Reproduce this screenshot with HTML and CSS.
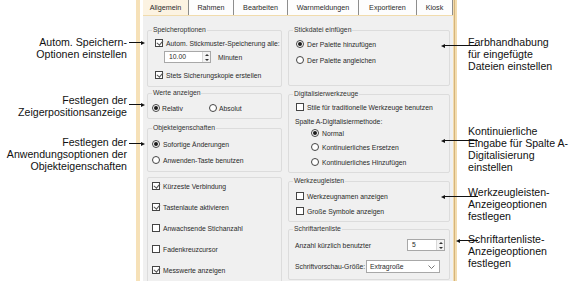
FILE: index.html
```html
<!DOCTYPE html>
<html lang="de">
<head>
    <meta charset="UTF-8">
    <title>Optionen - Allgemein</title>
    <link rel="stylesheet" href="styles.css">
</head>
<body>
    <div class="page">
        <div class="notes notes-left">
            <p class="note n1">Autom. Speichern-<br>Optionen einstellen</p>
            <p class="note n2">Festlegen der<br>Zeigerpositionsanzeige</p>
            <p class="note n3">Festlegen der<br>Anwendungsoptionen der<br>Objekteigenschaften</p>
        </div>

        <div class="dialog">
            <div class="tabs">
                <div class="tab active t1">Allgemein</div>
                <div class="tab t2">Rahmen</div>
                <div class="tab t3">Bearbeiten</div>
                <div class="tab t4">Warnmeldungen</div>
                <div class="tab t5">Exportieren</div>
                <div class="tab t6">Kiosk</div>
            </div>

            <div class="panel">
                <div class="col col-left">
                    <fieldset class="group g-save">
                        <legend>Speicheroptionen</legend>
                        <div class="row r-first"><span class="cb on"></span>Autom. Stickmuster-Speicherung alle:</div>
                        <div class="row r-spin">
                            <span class="spin spin-min"><span class="spin-val">10.00</span><span class="spin-btns"><i class="up"></i><i class="down"></i></span></span>
                            <span class="unit">Minuten</span>
                        </div>
                        <div class="row r-backup"><span class="cb on"></span>Stets Sicherungskopie erstellen</div>
                    </fieldset>

                    <fieldset class="group g-values">
                        <legend>Werte anzeigen</legend>
                        <div class="row">
                            <span class="opt opt-rel"><span class="rb on"></span>Relativ</span>
                            <span class="opt"><span class="rb"></span>Absolut</span>
                        </div>
                    </fieldset>

                    <fieldset class="group g-props">
                        <legend>Objekteigenschaften</legend>
                        <div class="row"><span class="rb on"></span>Sofortige Änderungen</div>
                        <div class="row"><span class="rb"></span>Anwenden-Taste benutzen</div>
                    </fieldset>

                    <fieldset class="group g-misc">
                        <div class="row"><span class="cb on"></span>Kürzeste Verbindung</div>
                        <div class="row"><span class="cb on"></span>Tastenlaute aktivieren</div>
                        <div class="row"><span class="cb"></span>Anwachsende Stichanzahl</div>
                        <div class="row"><span class="cb"></span>Fadenkreuzcursor</div>
                        <div class="row"><span class="cb on"></span>Messwerte anzeigen</div>
                    </fieldset>
                </div>

                <div class="col col-right">
                    <fieldset class="group g-insert">
                        <legend>Stickdatei einfügen</legend>
                        <div class="row"><span class="rb on"></span>Der Palette hinzufügen</div>
                        <div class="row"><span class="rb"></span>Der Palette angleichen</div>
                    </fieldset>

                    <fieldset class="group g-digit">
                        <legend>Digitalisierwerkzeuge</legend>
                        <div class="row"><span class="cb"></span>Stile für traditionelle Werkzeuge benutzen</div>
                        <div class="row r-label">Spalte A-Digitalisiermethode:</div>
                        <div class="row r-sub"><span class="rb on"></span>Normal</div>
                        <div class="row r-sub"><span class="rb"></span>Kontinuierliches Ersetzen</div>
                        <div class="row r-sub r-last"><span class="rb"></span>Kontinuierliches Hinzufügen</div>
                    </fieldset>

                    <fieldset class="group g-tools">
                        <legend>Werkzeugleisten</legend>
                        <div class="row"><span class="cb"></span>Werkzeugnamen anzeigen</div>
                        <div class="row"><span class="cb"></span>Große Symbole anzeigen</div>
                    </fieldset>

                    <fieldset class="group g-fonts">
                        <legend>Schriftartenliste</legend>
                        <div class="row r-recent">
                            <span class="field-label">Anzahl kürzlich benutzter</span>
                            <span class="spin spin-count"><span class="spin-val">5</span><span class="spin-btns"><i class="up"></i><i class="down"></i></span></span>
                        </div>
                        <div class="row r-preview">
                            <span class="field-label fl-short">Schriftvorschau-Größe:</span>
                            <span class="select">Extragroße
                                <svg width="7" height="4" viewBox="0 0 7 4"><polyline points="0.5,0.5 3.5,3.5 6.5,0.5" fill="none" stroke="#666" stroke-width="0.9"/></svg>
                            </span>
                        </div>
                    </fieldset>
                </div>
            </div>
        </div>

        <div class="notes notes-right">
            <p class="note m1">Farbhandhabung<br>für eingefügte<br>Dateien einstellen</p>
            <p class="note m2">Kontinuierliche<br>Eingabe für Spalte A-<br>Digitalisierung<br>einstellen</p>
            <p class="note m3">Werkzeugleisten-<br>Anzeigeoptionen<br>festlegen</p>
            <p class="note m4">Schriftartenliste-<br>Anzeigeoptionen<br>festlegen</p>
        </div>
    </div>
</body>
</html>
```

FILE: styles.css
```css
* {
    box-sizing: border-box;
}

body {
    margin: 0;
    width: 581px;
    height: 281px;
    overflow: hidden;
    background-color: #fff;
    font-family: "Liberation Sans", Arial, sans-serif;
}

.page {
    display: flex;
    height: 281px;
}

/* callout texts */
.notes {
    font-size: 10.6px;
    line-height: 12px;
    color: #111;
}

.note {
    margin: 0;
    position: relative;
    z-index: 5;
}

.note::after {
    content: "";
    position: absolute;
    height: 0;
    border-top: 1px solid #111;
}

.note::before {
    content: "";
    position: absolute;
    width: 0;
    height: 0;
    border-top: 2px solid transparent;
    border-bottom: 2px solid transparent;
}

.notes-left {
    width: 136px;
    flex: none;
    text-align: right;
}

.notes-left .note {
    padding-right: 9px;
}

.notes-left .note::after {
    left: 129px;
    width: 14px;
}

.notes-left .note::before {
    left: 141px;
    border-left: 4px solid #111;
}

.n1 { margin-top: 36px; }
.n2 { margin-top: 34px; }
.n3 { margin-top: 18px; }

.n1::after { top: 6px; }
.n1::before { top: 4.5px; }
.n2::after { top: 10px; }
.n2::before { top: 8.5px; }
.n3::after { top: 7px; }
.n3::before { top: 5.5px; }

.notes-right {
    flex: 1;
    padding-left: 11px;
}

.notes-right .note::after {
    left: -24px;
    width: 34px;
}

.notes-right .note::before {
    left: -27px;
    border-right: 4px solid #111;
}

.m1 { margin-top: 36px; }
.m2 { margin-top: 53px; }
.m3 { margin-top: 13px; }
.m4 { margin-top: 11px; }

.m1::after { top: 9px; }
.m1::before { top: 7.5px; }
.m2::after { top: 15px; }
.m2::before { top: 13.5px; }
.m3::after { top: 10px; }
.m3::before { top: 8.5px; }
.m4::after { top: 7px; }
.m4::before { top: 5.5px; }

.notes-right .m4::after {
    left: -10px;
    width: 20px;
}

.notes-right .m4::before {
    left: -12px;
}

/* dialog */
.dialog {
    width: 321px;
    flex: none;
    display: flex;
    flex-direction: column;
    border-left: 4px solid #f6e1b8;
    border-right: 4px solid #f3dcae;
    padding-left: 3px;
    font-size: 6.8px;
    color: #2a2a2a;
    position: relative;
}

.dialog::after {
    content: "";
    position: absolute;
    top: 0;
    bottom: 0;
    right: -2px;
    border-right: 1px solid #d4b47c;
}

.tabs {
    display: flex;
    height: 16px;
    border-bottom: 1px solid #f1dcad;
    background-color: #fff;
    font-size: 7.2px;
}

.tab {
    height: 15px;
    line-height: 15px;
    text-align: center;
    border-right: 1px solid #8d8d8d;
    background-color: #fdfdfd;
}

.tab.active {
    background-color: #fcf3e2;
}

.t1 { width: 46px; }
.t2 { width: 45px; }
.t3 { width: 54px; }
.t4 { width: 71px; }
.t5 { width: 58px; }
.t6 { width: 36px; }

.panel {
    flex: 1;
    display: flex;
    gap: 6px;
    padding: 0 3px 0 4px;
    background-color: #f0f0f0;
    overflow: hidden;
}

.col {
    display: flex;
    flex-direction: column;
}

.col-left {
    width: 135px;
}

.col-right {
    width: 162px;
}

.group {
    margin: 0;
    padding: 0 4px;
    min-width: 0;
    border: 1px solid #dcdcdc;
    border-radius: 2px;
}

.group legend {
    padding: 0 1px;
    line-height: 10px;
    color: #333;
}

.row {
    display: flex;
    align-items: center;
    gap: 2px;
    height: 12px;
    white-space: nowrap;
}

/* left column */
.g-save {
    margin-top: 9px;
    padding-bottom: 5px;
}

.g-save .row {
    margin-left: 3px;
}

.g-save .r-first {
    margin-top: 2px;
}

.g-save .r-spin {
    margin-top: 2px;
    margin-left: 12px;
    gap: 7px;
}

.g-save .r-backup {
    margin-top: 6px;
}

.g-values {
    margin-top: 1px;
    padding-top: 4px;
    padding-bottom: 4px;
}

.opt {
    display: flex;
    align-items: center;
    gap: 1px;
}

.opt-rel {
    width: 55px;
}

.g-props {
    margin-top: 4px;
    padding-top: 5px;
    padding-bottom: 5px;
}

.g-props .row + .row {
    margin-top: 4px;
}

.g-misc {
    margin-top: 5px;
    padding-top: 2px;
    padding-bottom: 10px;
    display: flex;
    flex-direction: column;
    gap: 9px;
}

/* right column */
.g-insert {
    margin-top: 9px;
    padding-top: 3px;
    padding-bottom: 19px;
}

.g-insert .row,
.g-digit .row,
.g-tools .row {
    margin-left: 3px;
}

.g-insert .row + .row {
    margin-top: 4px;
}

.g-digit {
    margin-top: 3px;
    padding-top: 2px;
    padding-bottom: 4px;
}

.g-digit .r-label {
    margin-top: 2px;
    margin-left: 2px;
}

.g-digit .r-sub {
    margin-left: 18px;
    margin-top: 2px;
}

.g-digit .r-label + .r-sub {
    margin-top: 0;
}

.g-digit .r-last {
    margin-top: 3px;
}

.g-tools {
    margin-top: 3px;
    padding-top: 4px;
    padding-bottom: 4px;
}

.g-tools .row + .row {
    margin-top: 3px;
}

.g-fonts {
    margin-top: 2px;
    padding-top: 5px;
    padding-bottom: 6px;
}

.g-fonts .row {
    margin-left: 2px;
    gap: 0;
}

.r-recent .field-label {
    width: 115px;
}

.g-fonts .r-preview {
    margin-top: 9px;
    height: 13px;
}

.fl-short {
    width: 71px;
    overflow: visible;
}

/* controls */
.cb,
.rb {
    flex: none;
    width: 8px;
    height: 8px;
    border: 1px solid #444;
    background-color: #fff;
    position: relative;
    margin-right: 1px;
}

.rb {
    border-radius: 50%;
}

.cb.on::after {
    content: "";
    position: absolute;
    left: 2px;
    top: -1px;
    width: 2.5px;
    height: 5px;
    border: solid #555;
    border-width: 0 1px 1px 0;
    transform: rotate(40deg);
}

.rb.on::after {
    content: "";
    position: absolute;
    left: 1px;
    top: 1px;
    width: 4px;
    height: 4px;
    border-radius: 50%;
    background-color: #1a1a1a;
}

.spin {
    display: flex;
    height: 12px;
    border: 1px solid #a8a8a8;
    background-color: #fff;
}

.spin-min {
    width: 47px;
}

.spin-count {
    width: 39px;
}

.spin-val {
    flex: 1;
    padding-left: 4px;
    line-height: 10px;
}

.spin-btns {
    width: 8px;
    display: flex;
    flex-direction: column;
    align-items: center;
    justify-content: space-around;
    border-left: 1px solid #d8d8d8;
    background-color: #f3f3f3;
}

.spin-btns i {
    width: 0;
    height: 0;
    border-left: 2px solid transparent;
    border-right: 2px solid transparent;
}

.spin-btns .up {
    border-bottom: 2px solid #333;
}

.spin-btns .down {
    border-top: 2px solid #333;
}

.select {
    position: relative;
    display: flex;
    align-items: center;
    justify-content: space-between;
    width: 74px;
    height: 13px;
    padding: 0 4px 0 3px;
    border: 1px solid #a8a8a8;
    background-color: #fff;
}
```
